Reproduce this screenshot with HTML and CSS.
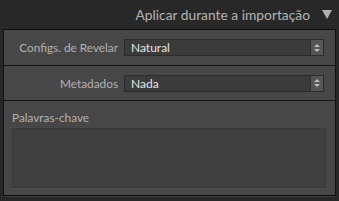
FILE: index.html
```html
<!DOCTYPE html>
<html lang="pt">
  <head>
    <meta charset="UTF-8">
    <title>Aplicar durante a importação</title>
    <link rel="stylesheet" href="styles.css">
  </head>
  <body>
    <div class="header">
      <span class="header-title">Aplicar durante a importação</span>
      <span class="header-arrow"></span>
    </div>
    <div class="panel">
      <div class="row">
        <div class="label">Configs. de Revelar</div>
        <div class="select">
          <span class="select-value">Natural</span>
          <span class="spinner"><i class="up"></i><i class="down"></i></span>
        </div>
      </div>
      <div class="row">
        <div class="label">Metadados</div>
        <div class="select">
          <span class="select-value">Nada</span>
          <span class="spinner"><i class="up"></i><i class="down"></i></span>
        </div>
      </div>
      <div class="keywords">
        <div class="keywords-label">Palavras-chave</div>
        <div class="keywords-box"></div>
      </div>
    </div>
  </body>
</html>
```

FILE: styles.css
```css
html, body {
  margin: 0;
  background-color: #282828;
}
body {
  width: 339px;
  height: 201px;
  overflow: hidden;
  font-family: Lato, "Noto Sans", sans-serif;
}
.header {
  height: 29px;
  display: flex;
  align-items: center;
  justify-content: flex-end;
  padding-right: 7px;
  box-sizing: border-box;
}
.header-title {
  color: #b4b4b4;
  font-size: 13.8px;
  margin-right: 12px;
  margin-top: -1px;
}
.header-arrow {
  width: 0;
  height: 0;
  border-left: 5px solid transparent;
  border-right: 5px solid transparent;
  border-top: 9px solid #b0b0b0;
}
.panel {
  margin: 0 3px 0 3px;
  height: 167px;
  border: 1px solid #0e0e0e;
  background-color: #474747;
  box-sizing: border-box;
  box-shadow: 0 1px 0 #3a3a3a;
}
.row {
  height: 36px;
  border-bottom: 1px solid #141414;
  box-sizing: border-box;
  display: flex;
  align-items: center;
}
.row + .row {
  height: 35px;
}
.label {
  width: 114px;
  text-align: right;
  color: #b2b2b2;
  font-size: 11.8px;
}
.select {
  margin-left: 6px;
  width: 200px;
  height: 17px;
  box-sizing: border-box;
  border: 1px solid #2c2c2c;
  background-color: #3b3b3b;
  display: flex;
  align-items: center;
}
.select-value {
  flex: 1;
  color: #e6e6e6;
  font-size: 12px;
  padding-left: 6px;
}
.spinner {
  width: 12px;
  height: 15px;
  background-color: #555555;
  border-left: 1px solid #2c2c2c;
  display: flex;
  flex-direction: column;
  align-items: center;
  justify-content: center;
  gap: 2px;
}
.spinner i {
  width: 0;
  height: 0;
  border-left: 3px solid transparent;
  border-right: 3px solid transparent;
}
.spinner .up {
  border-bottom: 3px solid #bdbdbd;
}
.spinner .down {
  border-top: 3px solid #bdbdbd;
}
.keywords {
  padding: 9px 9px 0 8px;
}
.keywords-label {
  color: #b2b2b2;
  font-size: 11.8px;
  height: 18px;
}
.keywords-box {
  height: 58px;
  border: 1px solid #383838;
  background-color: #404040;
  box-shadow: 0 1px 0 #4e4e4e;
}
```
